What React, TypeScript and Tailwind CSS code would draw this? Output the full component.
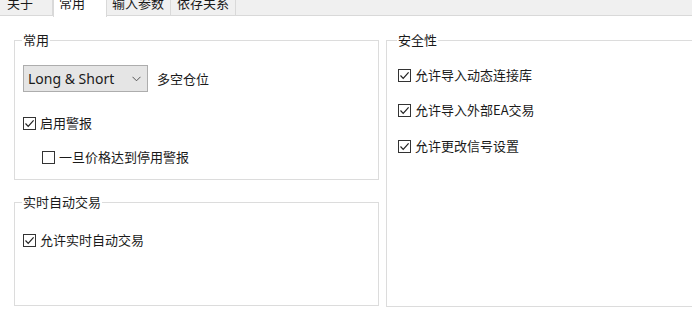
import React from "react";

const font = { fontFamily: '"Noto Sans CJK SC", "Noto Sans", sans-serif' };

function Check({ checked, label }: { checked?: boolean; label: string }) {
  return (
    <label className="flex items-center h-[16px] text-[13px] leading-[16px] text-[#1a1a1a]">
      <span className="w-[13px] h-[13px] border border-[#333] bg-white flex items-center justify-center shrink-0">
        {checked && (
          <svg width="11" height="11" viewBox="0 0 11 11">
            <path d="M1.5 5.5 L4.2 8.3 L9.6 2.3" fill="none" stroke="#222" strokeWidth="1.2" />
          </svg>
        )}
      </span>
      <span className="ml-[4px]">{label}</span>
    </label>
  );
}

function Group({ title, className, children }: { title: string; className?: string; children: React.ReactNode }) {
  return (
    <fieldset className={"border border-[#dcdcdc] min-w-0 " + (className ?? "")}>
      <legend className="text-[13px] leading-[16px] text-[#1a1a1a] px-[1px] -ml-[1px] whitespace-nowrap">{title}</legend>
      {children}
    </fieldset>
  );
}

const tabs = [
  { t: "关于", w: "w-[53px] pl-[7px]" },
  { t: "常用", w: "w-[54px] pl-[5px]" },
  { t: "输入参数", w: "w-[64px] pl-[5px]" },
  { t: "依存关系", w: "w-[65px] pl-[6px]" },
];

export default function App() {
  return (
    <div className="w-[692px] h-[312px] bg-white overflow-hidden" style={font}>
      <div className="flex h-[16px] bg-[#f0f0f0] border-b border-[#d9d9d9]">
        {tabs.map((tab, i) => (
          <div
            key={tab.t}
            className={
              "shrink-0 whitespace-nowrap text-[13px] leading-[16px] -mt-[5px] text-[#1a1a1a] " +
              tab.w +
              (i === 1
                ? " bg-white border-x border-[#d9d9d9] h-[22px] z-10"
                : " h-[21px] border-r border-[#d9d9d9]")
            }
          >
            {tab.t}
          </div>
        ))}
      </div>
      <div className="flex pl-[14px] gap-[7px]">
        <div className="w-[365px] shrink-0 flex flex-col">
          <Group title="常用" className="w-full mt-[16px] h-[148px] pl-[8px]">
            <div className="flex items-center mt-[17px]">
              <div
                className="w-[125px] h-[27px] bg-[#e5e5e5] border border-[#adadad] flex items-center justify-between pl-[4px] pr-[6px] text-[14px] text-[#1a1a1a]"
                style={{ fontFamily: '"Noto Sans", sans-serif' }}
              >
                <span>Long &amp; Short</span>
                <svg width="9" height="6" viewBox="0 0 9 6">
                  <path d="M0.5 0.8 L4.5 4.8 L8.5 0.8" fill="none" stroke="#555" strokeWidth="1" />
                </svg>
              </div>
              <span className="ml-[9px] text-[13px] text-[#1a1a1a]">多空仓位</span>
            </div>
            <div className="mt-[23px]">
              <Check checked label="启用警报" />
            </div>
            <div className="mt-[18px] pl-[19px]">
              <Check label="一旦价格达到停用警报" />
            </div>
          </Group>
          <Group title="实时自动交易" className="w-full mt-[14px] h-[112px] pl-[8px]">
            <div className="mt-[22px]">
              <Check checked label="允许实时自动交易" />
            </div>
          </Group>
        </div>
        <Group title="安全性" className="mt-[16px] h-[275px] w-[330px] shrink-0 pl-[11px]">
          <div className="mt-[19px]">
            <Check checked label="允许导入动态连接库" />
          </div>
          <div className="mt-[19px]">
            <Check checked label="允许导入外部EA交易" />
          </div>
          <div className="mt-[20px]">
            <Check checked label="允许更改信号设置" />
          </div>
        </Group>
      </div>
    </div>
  );
}
